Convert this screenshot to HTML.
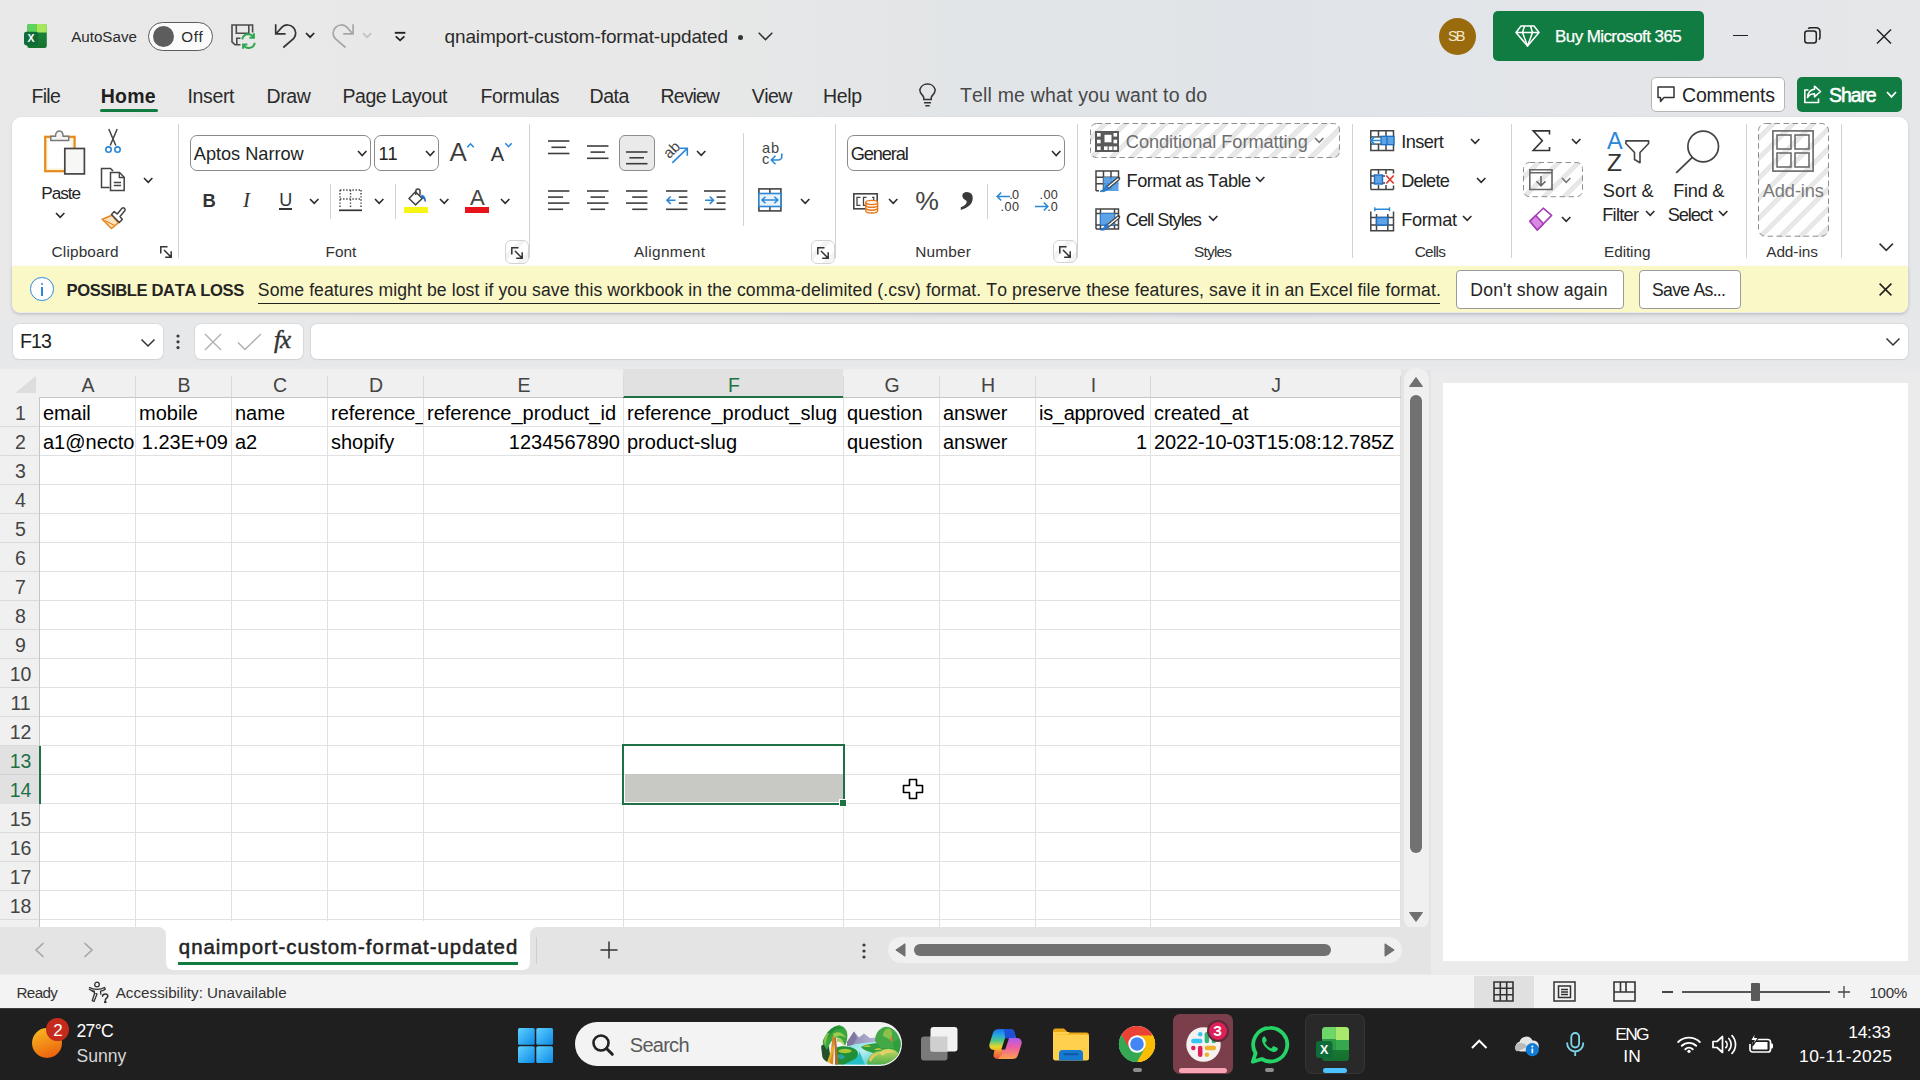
<!DOCTYPE html>
<html lang="en">
<head>
<meta charset="utf-8">
<title>qnaimport-custom-format-updated - Excel</title>
<style>
*{box-sizing:border-box;margin:0;padding:0}
html,body{width:1920px;height:1080px;overflow:hidden}
body{position:relative;font-family:"Liberation Sans",sans-serif;color:#242424;background:#e9e9e9}
.abs{position:absolute}
.t{position:absolute;white-space:nowrap;line-height:1;transform-origin:0 0;font-kerning:none}
svg{position:absolute;overflow:visible}
/* ---------- window chrome ---------- */
#chrome{left:0;top:0;width:1920px;height:1008px;background:linear-gradient(90deg,#e9e9e9 0%,#e8e8e8 35%,#e2e5e7 50%,#e0e4e8 65%,#e3e5e9 85%,#e6e7e9 100%)}
#ribbon{left:12px;top:117px;width:1896px;height:196px;background:#fff;border-radius:9px 9px 8px 8px;box-shadow:0 1px 3px rgba(0,0,0,.12)}
#msgbar{left:12px;top:266px;width:1896px;height:46px;background:#fbf8c8;border-radius:0 0 8px 8px;box-shadow:0 2px 4px rgba(0,0,0,.10)}
#lower{left:0;top:318px;width:1920px;height:657px;background:linear-gradient(180deg,#e6e8ea 0,#e7e8ea 45px,#ebebec 60px,#ebebec 100%)}
/* ---------- formula bar ---------- */
.fbox{background:#fff;border-radius:6px;height:35px;top:324px;box-shadow:0 0 0 1px rgba(0,0,0,.05),0 1px 2px rgba(0,0,0,.06)}
/* ---------- grid ---------- */
#grid{left:0;top:370px;width:1401px;height:557px;background:#fff;overflow:hidden}
#colhdr{left:0;top:0;width:1401px;height:28px;background:#f0f0f0}
#rowhdr{left:0;top:28px;width:39px;height:529px;background:#f0f0f0}
.vl{position:absolute;top:28px;width:1px;height:529px;background:#e1e1e1}
.hl{position:absolute;left:40px;width:1361px;height:1px;background:#e1e1e1}
.ch{position:absolute;top:3px;height:24px;font-size:19.5px;line-height:24px;text-align:center;color:#444}
.rh{position:absolute;left:1px;width:39px;height:29px;font-size:19.5px;line-height:30px;text-align:center;color:#444}
.c{position:absolute;height:28px;font-size:20px;line-height:30.500px;color:#000;white-space:nowrap;overflow:hidden;padding:0 3px;font-kerning:none}
.r{text-align:right}
.hatch{background:repeating-linear-gradient(135deg,#fff 0,#fff 8.800px,#e7e7e7 8.800px,#e7e7e7 14.100px)}
.hatch2{background:repeating-linear-gradient(135deg,#fff 0,#fff 8.800px,#f3f3f3 8.800px,#f3f3f3 14.100px)}
/* ---------- taskbar ---------- */
#taskbar{left:0;top:1008px;width:1920px;height:72px;background:#1f1f1f;box-shadow:inset 0 1px 0 #3c3c3c}
</style>
</head>
<body>
<div id="chrome" class="abs"></div>
<div id="lower" class="abs"></div>
<div id="ribbon" class="abs"></div>
<div id="msgbar" class="abs"></div>

<!-- TITLEBAR -->
<div id="titlebar" class="abs" style="left:0;top:0;width:1920px;height:72px">
<svg style="left:23px;top:23px" width="25" height="26" viewBox="0 0 25 26">
<defs><linearGradient id="xg1" x1="0" y1="0" x2="0" y2="1"><stop offset="0" stop-color="#1f8a3a"/><stop offset="1" stop-color="#14732f"/></linearGradient></defs>
<rect x="4.200" y="1" width="19.600" height="24" rx="2.200" fill="url(#xg1)"/>
<path d="M4.200 3.200a2.200 2.200 0 0 1 2.200-2.200H13.500V9.500H4.200z" fill="#5fd45c"/>
<path d="M13.500 1h8.100a2.200 2.200 0 0 1 2.200 2.200V9.500H13.500z" fill="#a6e85c"/>
<rect x="1" y="8.800" width="14.200" height="13.600" rx="2.400" fill="#0f6c39"/>
<text x="8.100" y="19.300" text-anchor="middle" font-size="10.500" font-weight="700" fill="#fff" font-family="Liberation Sans, sans-serif">X</text>
</svg>
<div class="t" style="left:71.20px;top:29.13px;font-size:15.2px;color:#2b2b2b;letter-spacing:-0.015px;">AutoSave</div>
<div class="abs" style="left:147.500px;top:21.500px;width:65px;height:29px;border:1.500px solid #5c5c5c;border-radius:15px;background:#fbfbfb"></div>
<div class="abs" style="left:152.500px;top:25.500px;width:21px;height:21px;border-radius:50%;background:#5d5d5d"></div>
<div class="t" style="left:181.30px;top:29.13px;font-size:15.2px;color:#2b2b2b;letter-spacing:0.583px;">Off</div>
<svg style="left:231px;top:24px" width="25" height="24" viewBox="0 0 25 24" fill="none">
<path d="M9.500 20.800H4L1 17.800V1H21.600V8.500" stroke="#4a4a4a" stroke-width="1.600"/>
<path d="M5.300 1V9.300H17.800V1M5.800 20.500V14.200H9.500" stroke="#4a4a4a" stroke-width="1.600"/>
<path d="M11.300 15.300A6 6 0 0 1 22.300 13M23.700 18.800A6 6 0 0 1 12.700 21.200" stroke="#2ea84f" stroke-width="2"/>
<path d="M22.900 9.300V13.800H18.400M12.100 24.700V20.400H16.400" stroke="#2ea84f" stroke-width="2"/>
</svg>
<svg style="left:274px;top:23px" width="24" height="26" viewBox="0 0 24 26" fill="none" stroke="#333" stroke-width="1.700">
<path d="M1.700 1.200V10.800H11.600"/><path d="M2.300 10.500L8.200 3.900A8.200 8.200 0 0 1 19.800 15.400L9.300 24.500"/></svg>
<svg style="left:306.2px;top:33.2px" width="8.2" height="4.8" viewBox="0 0 8.2 4.8"><path d="M0 0L4.1 4.2L8.2 0" fill="none" stroke="#222" stroke-width="1.7" stroke-linejoin="miter"/></svg>
<svg style="left:332px;top:23px" width="24" height="26" viewBox="0 0 24 26" fill="none" stroke="#a6a6a6" stroke-width="1.700">
<path d="M21.100 1.200V10.800H11.200"/><path d="M20.500 10.500L14.600 3.900A8.200 8.200 0 0 0 3 15.400L13.500 24.500"/></svg>
<svg style="left:363.2px;top:33.2px" width="8.2" height="4.8" viewBox="0 0 8.2 4.8"><path d="M0 0L4.1 4.2L8.2 0" fill="none" stroke="#c0c0c0" stroke-width="1.7" stroke-linejoin="miter"/></svg>
<svg style="left:394px;top:31px" width="12" height="11" viewBox="0 0 12 11" fill="none" stroke="#222"><path d="M.8 1.800h10.600" stroke-width="1.900"/><path d="M1.800 5.300L6.100 9.300 10.400 5.300" stroke-width="1.800"/></svg>
<div class="t" style="left:444.50px;top:26.92px;font-size:19px;color:#2b2b2b;letter-spacing:-0.125px;">qnaimport-custom-format-updated</div>
<div class="abs" style="left:738px;top:35px;width:5px;height:5px;border-radius:50%;background:#333"></div>
<svg style="left:758px;top:32px" width="15" height="9" viewBox="0 0 15 9" fill="none" stroke="#333" stroke-width="1.500"><path d="M.7 .8L7.500 7.600 14.300 .8"/></svg>
<div class="abs" style="left:1438.500px;top:17.500px;width:37px;height:37px;border-radius:50%;background:#9a6b0d"></div>
<div class="t" style="left:1448.00px;top:28.93px;font-size:14.5px;color:#f4ead0;letter-spacing:-2.043px;">SB</div>
<div class="abs" style="left:1493px;top:11px;width:211px;height:50px;border-radius:5px;background:#107c41"></div>
<svg style="left:1515px;top:25px" width="25" height="22" viewBox="0 0 25 22" fill="none" stroke="#fff" stroke-width="1.500" stroke-linejoin="round">
<path d="M6 1H19L24 7.500 12.500 21 1 7.500Z"/><path d="M1 7.500H24M9.500 1L7.500 7.500 12.500 21 17.500 7.500 15.500 1"/></svg>
<div class="t" style="left:1555.00px;top:28.11px;font-size:17px;color:#fff;letter-spacing:-0.584px;-webkit-text-stroke:.25px #fff;">Buy Microsoft 365</div>
<div class="abs" style="left:1732.500px;top:34.500px;width:15px;height:1.500px;background:#222"></div>
<svg style="left:1804px;top:27px" width="17" height="17" viewBox="0 0 17 17" fill="none" stroke="#222" stroke-width="1.500"><rect x=".8" y="4" width="11.500" height="12" rx="2.500"/><path d="M4.300 1.800A2.500 2.500 0 0 1 6.500 .8H12.500A3.500 3.500 0 0 1 16 4.300V10.500A2.500 2.500 0 0 1 14.800 12.600"/></svg>
<svg style="left:1876px;top:29px" width="16" height="15" viewBox="0 0 16 15" fill="none" stroke="#222" stroke-width="1.500"><path d="M1 .5L15 14.500M15 .5L1 14.500"/></svg>
</div><!--/titlebar-->
<!-- TABS -->
<div id="tabs" class="abs" style="left:0;top:72px;width:1920px;height:45px">
<div class="t" style="left:31.50px;top:14.59px;font-size:19.5px;color:#2b2b2b;letter-spacing:-0.722px;">File</div>
<div class="t" style="left:187.50px;top:14.59px;font-size:19.5px;color:#2b2b2b;letter-spacing:-0.354px;">Insert</div>
<div class="t" style="left:266.50px;top:14.59px;font-size:19.5px;color:#2b2b2b;letter-spacing:-0.351px;">Draw</div>
<div class="t" style="left:342.50px;top:14.59px;font-size:19.5px;color:#2b2b2b;letter-spacing:-0.451px;">Page Layout</div>
<div class="t" style="left:480.50px;top:14.59px;font-size:19.5px;color:#2b2b2b;letter-spacing:-0.325px;">Formulas</div>
<div class="t" style="left:589.50px;top:14.59px;font-size:19.5px;color:#2b2b2b;letter-spacing:-0.435px;">Data</div>
<div class="t" style="left:660.50px;top:14.59px;font-size:19.5px;color:#2b2b2b;letter-spacing:-0.900px;">Review</div>
<div class="t" style="left:751.70px;top:14.59px;font-size:19.5px;color:#2b2b2b;letter-spacing:-0.555px;">View</div>
<div class="t" style="left:823.00px;top:14.59px;font-size:19.5px;color:#2b2b2b;letter-spacing:-0.370px;">Help</div>
<div class="t" style="left:100.80px;top:14.59px;font-size:19.5px;color:#1f1f1f;letter-spacing:0.176px;font-weight:700;">Home</div>
<div class="abs" style="left:100px;top:36.5px;width:58px;height:3px;border-radius:2px;background:#107c41"></div>
<svg style="left:918px;top:11px" width="19" height="24" viewBox="0 0 19 24" fill="none" stroke="#333" stroke-width="1.500">
<path d="M5.800 16.500V15c0-1.200-.7-2.100-1.700-3.100A7.400 7.400 0 0 1 1.800 6.800 7.700 7.700 0 0 1 9.500 1 7.700 7.700 0 0 1 17.200 6.800a7.400 7.400 0 0 1-2.300 5.100c-1 1-1.700 1.900-1.700 3.100v1.500z"/><path d="M6 19.700h7M7.300 22.700h4.400"/></svg>
<div class="t" style="left:960.00px;top:14.39px;font-size:19.5px;color:#484848;letter-spacing:0.168px;">Tell me what you want to do</div>
<div class="abs" style="left:1650.500px;top:4.5px;width:134px;height:35px;border-radius:5px;background:#fff;border:1px solid #b5b5b5"></div>
<svg style="left:1657px;top:14px" width="18" height="17" viewBox="0 0 18 17" fill="none" stroke="#333" stroke-width="1.500" stroke-linejoin="round"><path d="M1 1H17V11.500H7L3.500 15.500V11.500H1Z"/></svg>
<div class="t" style="left:1682.00px;top:13.69px;font-size:19.5px;color:#242424;letter-spacing:-0.183px;">Comments</div>
<div class="abs" style="left:1797px;top:4.5px;width:105px;height:35px;border-radius:5px;background:#107c41"></div>
<svg style="left:1803px;top:13px" width="19" height="19" viewBox="0 0 19 19" fill="none" stroke="#fff" stroke-width="1.600" stroke-linejoin="round">
<path d="M5.500 5H1.800V17.500H15.500V13.500"/><path d="M11.500 1.200L17.500 6.500 11.500 11.800V8.700C8 8.700 6 10 4.500 12.500 4.800 8 7 4.800 11.500 4.300Z"/></svg>
<div class="t" style="left:1829.00px;top:13.69px;font-size:19.5px;color:#fff;letter-spacing:-1.081px;-webkit-text-stroke:.55px #fff;">Share</div>
<svg style="left:1887px;top:20.299999999999997px" width="9" height="5.5" viewBox="0 0 9 5.5"><path d="M0 0L4.5 4.9L9 0" fill="none" stroke="#fff" stroke-width="1.7" stroke-linejoin="miter"/></svg>
</div><!--/tabs-->
<!-- RIBBON CONTENT -->
<div id="rib" class="abs" style="left:0;top:117px;width:1920px;height:150px">
<svg style="left:43px;top:12px" width="43" height="47" viewBox="0 0 43 47" >
<rect x="2.200" y="7.800" width="29.400" height="34.400" fill="#fdf3d6" stroke="#e5891c" stroke-width="2.200"/>
<rect x="5.300" y="10.800" width="23" height="28.500" fill="#fff"/>
<path d="M7.800 11.500V7.300h4.700c0-2 .7-5.300 3.800-5.300s3.800 3.300 3.800 5.300h5.600v4.200z" fill="#f4f4f4" stroke="#7a7a7a" stroke-width="1.500"/>
<rect x="21.800" y="19.500" width="19.600" height="25.400" fill="#f7f7f5" stroke="#444" stroke-width="1.700"/>
</svg>
<div class="t" style="left:41.30px;top:67.64px;font-size:17.2px;color:#242424;letter-spacing:-1.070px;">Paste</div>
<svg style="left:56.2px;top:96.19999999999999px" width="8.4" height="5" viewBox="0 0 8.4 5" ><path d="M0 0L4.2 4.3L8.4 0" fill="none" stroke="#2b2b2b" stroke-width="1.6"/></svg>
<svg style="left:104px;top:11px" width="18" height="26" viewBox="0 0 18 26" >
<path d="M4.800 1L11.800 17.500M13.200 1L6.200 17.500" fill="none" stroke="#444" stroke-width="1.500"/>
<circle cx="4.500" cy="21.600" r="2.700" fill="none" stroke="#2b88d8" stroke-width="1.600"/>
<circle cx="13.500" cy="21.600" r="2.700" fill="none" stroke="#2b88d8" stroke-width="1.600"/>
</svg>
<svg style="left:100px;top:50px" width="26" height="25" viewBox="0 0 26 25" >
<path d="M9.500 20.500H1.500V1.500H10.500L13 4" fill="none" stroke="#444" stroke-width="1.500"/>
<path d="M10.500 5.500H19.500L24.200 10.200V23.500H10.500Z" fill="#fff" stroke="#444" stroke-width="1.500"/>
<path d="M19.300 5.800V10.500H24M13.800 15.500H21M13.800 18.500H21" fill="none" stroke="#444" stroke-width="1.300"/>
</svg>
<svg style="left:144px;top:61px" width="8.4" height="5" viewBox="0 0 8.4 5" ><path d="M0 0L4.2 4.3L8.4 0" fill="none" stroke="#2b2b2b" stroke-width="1.6"/></svg>
<svg style="left:101px;top:89px" width="25" height="24" viewBox="0 0 25 24" >
<path d="M1.200 13.200L11 9.200 17.300 16.800 10.500 22.500Z" fill="#fbe3c4" stroke="#e5891c" stroke-width="1.600" stroke-linejoin="round"/>
<path d="M4 14.500L13.500 19.500" fill="none" stroke="#e5891c" stroke-width="1.400"/>
<path d="M10.500 8.500L13.200 5.600 16.200 8 21 2.300a1.900 1.900 0 0 1 2.800 2.500L19 10.500 21.300 13.500 18.300 16.500Z" fill="#fff" stroke="#444" stroke-width="1.500" stroke-linejoin="round"/>
</svg>
<div class="t" style="left:51.60px;top:127.26px;font-size:15.4px;color:#333;letter-spacing:0.136px;">Clipboard</div>
<svg style="left:160px;top:129px" width="12" height="12" viewBox="0 0 12 12" ><path d="M.8 7.500V.8H7.500M4 4L11 11M11.200 5.200V11.200H5.200" fill="none" stroke="#333" stroke-width="1.500"/></svg>
<div class="abs" style="left:177.5px;top:7px;width:1px;height:133.5px;background:#d2d2d2"></div>
<div class="abs" style="left:190px;top:18px;width:180.5px;height:35.5px;border:1px solid #8a8a8a;border-radius:7px;background:#fff"></div>
<div class="t" style="left:193.80px;top:28.39px;font-size:18.2px;color:#242424;letter-spacing:-0.027px;">Aptos Narrow</div>
<svg style="left:357.6px;top:34.19999999999999px" width="8.4" height="5.2" viewBox="0 0 8.4 5.2" ><path d="M0 0L4.2 4.5L8.4 0" fill="none" stroke="#2b2b2b" stroke-width="1.6"/></svg>
<div class="abs" style="left:374.3px;top:18px;width:64.5px;height:35.5px;border:1px solid #8a8a8a;border-radius:7px;background:#fff"></div>
<div class="t" style="left:378.50px;top:28.39px;font-size:18.2px;color:#242424;letter-spacing:-1.200px;">11</div>
<svg style="left:425.8px;top:34.19999999999999px" width="8.4" height="5.2" viewBox="0 0 8.4 5.2" ><path d="M0 0L4.2 4.5L8.4 0" fill="none" stroke="#2b2b2b" stroke-width="1.6"/></svg>
<div class="t" style="left:449.60px;top:21.79px;font-size:26px;color:#333;-webkit-text-stroke:.2px #fff;">A</div>
<svg style="left:466.5px;top:25.5px" width="7" height="4.5" viewBox="0 0 7 4.5" ><path d="M.3 4.200L3.500 .8 6.700 4.200" fill="none" stroke="#2b88d8" stroke-width="1.600"/></svg>
<div class="t" style="left:490.80px;top:26.87px;font-size:20px;color:#333;">A</div>
<svg style="left:504.5px;top:26px" width="7" height="4.5" viewBox="0 0 7 4.5" ><path d="M.3 .3L3.500 3.700 6.700 .3" fill="none" stroke="#2b88d8" stroke-width="1.600"/></svg>
<div class="t" style="left:202.50px;top:74.92px;font-size:18.4px;color:#333;font-weight:700;">B</div>
<div class="t" style="left:242.88px;top:72.91px;font-size:21px;color:#333;font-style:italic;font-family:'Liberation Serif',serif;">I</div>
<div class="t" style="left:279.20px;top:73.86px;font-size:18px;color:#333;">U</div>
<div class="abs" style="left:278.5px;top:91px;width:13.300000000000011px;height:1.5999999999999943px;background:#333"></div>
<svg style="left:310px;top:82px" width="8.4" height="5" viewBox="0 0 8.4 5" ><path d="M0 0L4.2 4.3L8.4 0" fill="none" stroke="#2b2b2b" stroke-width="1.6"/></svg>
<div class="abs" style="left:329.5px;top:66.5px;width:1px;height:35.19999999999999px;background:#d2d2d2"></div>
<svg style="left:339px;top:72px" width="23" height="23" viewBox="0 0 23 23" >
<path d="M1 1H22M1 1V19M22 1V19M11.500 1V19M1 10H22" fill="none" stroke="#444" stroke-width="1.400" stroke-dasharray="1.400 1.700"/>
<path d="M0 21.300H23" stroke="#333" stroke-width="1.700"/></svg>
<svg style="left:374.8px;top:82px" width="8.4" height="5" viewBox="0 0 8.4 5" ><path d="M0 0L4.2 4.3L8.4 0" fill="none" stroke="#2b2b2b" stroke-width="1.6"/></svg>
<div class="abs" style="left:394.5px;top:66.5px;width:1px;height:35.19999999999999px;background:#d2d2d2"></div>
<svg style="left:406px;top:71px" width="22" height="18" viewBox="0 0 22 18" >
<path d="M9.500 3.800L16.200 10.500 9.500 16.800 3 10.500Z" fill="#fff" stroke="#444" stroke-width="1.600" stroke-linejoin="round"/>
<path d="M9.800 7V3.300c0-1.400 1-2.300 2.100-2.300s2.100.9 2.100 2.300v4" fill="none" stroke="#444" stroke-width="1.500"/>
<path d="M15.800 7.200c2.200.3 3.700 2.200 3.500 6.300-.8-2.500-2-3.600-3.700-4z" fill="#1e6fc0" stroke="#1e6fc0" stroke-width="1"/></svg>
<div class="abs" style="left:403.7px;top:89.6px;width:24.400000000000034px;height:6.599999999999994px;background:#f6f516"></div>
<svg style="left:440px;top:82px" width="8.4" height="5" viewBox="0 0 8.4 5" ><path d="M0 0L4.2 4.3L8.4 0" fill="none" stroke="#2b2b2b" stroke-width="1.6"/></svg>
<div class="t" style="left:470.00px;top:70.01px;font-size:22.2px;color:#444;">A</div>
<div class="abs" style="left:464.8px;top:89.80000000000001px;width:24.19999999999999px;height:6.199999999999989px;background:#e8121a"></div>
<svg style="left:501px;top:82px" width="8.4" height="5" viewBox="0 0 8.4 5" ><path d="M0 0L4.2 4.3L8.4 0" fill="none" stroke="#2b2b2b" stroke-width="1.6"/></svg>
<div class="t" style="left:325.60px;top:127.26px;font-size:15.4px;color:#333;letter-spacing:-0.038px;">Font</div>
<div class="abs hatch2" style="left:505px;top:123.0px;width:23.500px;height:23.500px;border:1px solid #d4d4d4;border-radius:6px"></div><svg style="left:511px;top:129.5px" width="12" height="12" viewBox="0 0 12 12" ><path d="M.8 7.500V.8H7.500M4 4L11 11M11.200 5.200V11.200H5.200" fill="none" stroke="#333" stroke-width="1.500"/></svg>
<div class="abs" style="left:528.5px;top:7px;width:1px;height:133.5px;background:#d2d2d2"></div>
<svg style="left:548.3px;top:22.400000000000006px" width="21.4" height="16.5" viewBox="0 0 21.4 16.5" ><path d="M0.00 2.00H21.40" stroke="#3d3d3d" stroke-width="1.6"/><path d="M3.40 8.30H17.90" stroke="#3d3d3d" stroke-width="1.6"/><path d="M0.00 14.50H21.40" stroke="#3d3d3d" stroke-width="1.6"/></svg>
<svg style="left:587.3px;top:26.80000000000001px" width="21.5" height="16.3" viewBox="0 0 21.5 16.3" ><path d="M0.00 2.00H21.50" stroke="#3d3d3d" stroke-width="1.6"/><path d="M3.50 8.10H18.00" stroke="#3d3d3d" stroke-width="1.6"/><path d="M0.00 14.30H21.50" stroke="#3d3d3d" stroke-width="1.6"/></svg>
<div class="abs" style="left:619.2px;top:18.19999999999999px;width:36.0px;height:35.60000000000002px;background:#eaeaea;border:1px solid #8c8c8c;border-radius:6px"></div>
<svg style="left:626.3px;top:33.30000000000001px" width="21.5" height="15.7" viewBox="0 0 21.5 15.7" ><path d="M0.00 2.00H21.50" stroke="#3d3d3d" stroke-width="1.6"/><path d="M3.40 7.80H18.00" stroke="#3d3d3d" stroke-width="1.6"/><path d="M0.00 13.70H21.50" stroke="#3d3d3d" stroke-width="1.6"/></svg>
<div class="t" style="left:662.500px;top:24.5px;font-size:15px;color:#444;transform:rotate(-45deg);transform-origin:50% 50%">ab</div>
<svg style="left:671px;top:30px" width="18" height="17" viewBox="0 0 18 17" ><path d="M1.300 15.800L16 1.600M8.800 1.300H16.300V8.800" fill="none" stroke="#2b88d8" stroke-width="1.600"/></svg>
<svg style="left:697px;top:34.19999999999999px" width="8.4" height="5" viewBox="0 0 8.4 5" ><path d="M0 0L4.2 4.3L8.4 0" fill="none" stroke="#2b2b2b" stroke-width="1.6"/></svg>
<svg style="left:548.3px;top:72.1px" width="21.4" height="22.3" viewBox="0 0 21.4 22.3" ><path d="M0.00 2.00H21.40" stroke="#3d3d3d" stroke-width="1.6"/><path d="M0.00 8.10H15.10" stroke="#3d3d3d" stroke-width="1.6"/><path d="M0.00 14.10H21.40" stroke="#3d3d3d" stroke-width="1.6"/><path d="M0.00 20.30H15.10" stroke="#3d3d3d" stroke-width="1.6"/></svg>
<svg style="left:587.3px;top:72.1px" width="21.5" height="22.3" viewBox="0 0 21.5 22.3" ><path d="M0.00 2.00H21.50" stroke="#3d3d3d" stroke-width="1.6"/><path d="M3.50 8.10H18.00" stroke="#3d3d3d" stroke-width="1.6"/><path d="M0.00 14.10H21.50" stroke="#3d3d3d" stroke-width="1.6"/><path d="M3.50 20.30H18.00" stroke="#3d3d3d" stroke-width="1.6"/></svg>
<svg style="left:626.4px;top:72.1px" width="21.4" height="22.3" viewBox="0 0 21.4 22.3" ><path d="M0.00 2.00H21.40" stroke="#3d3d3d" stroke-width="1.6"/><path d="M6.20 8.10H21.40" stroke="#3d3d3d" stroke-width="1.6"/><path d="M0.00 14.10H21.40" stroke="#3d3d3d" stroke-width="1.6"/><path d="M6.20 20.30H21.40" stroke="#3d3d3d" stroke-width="1.6"/></svg>
<svg style="left:665.5px;top:72.1px" width="21.4" height="22.3" viewBox="0 0 21.4 22.3" ><path d="M0.00 2.00H21.40" stroke="#3d3d3d" stroke-width="1.6"/><path d="M12.80 8.10H21.40" stroke="#3d3d3d" stroke-width="1.6"/><path d="M12.80 14.10H21.40" stroke="#3d3d3d" stroke-width="1.6"/><path d="M0.00 20.30H21.40" stroke="#3d3d3d" stroke-width="1.6"/></svg>
<svg style="left:665.5px;top:79px" width="9.5" height="8.4" viewBox="0 0 9.5 8.4" ><path d="M9.500 4.200H1.200M4.700 .5L1 4.200 4.700 7.900" fill="none" stroke="#2b88d8" stroke-width="1.600"/></svg>
<svg style="left:704.4px;top:72.1px" width="21.6" height="22.3" viewBox="0 0 21.6 22.3" ><path d="M0.00 2.00H21.60" stroke="#3d3d3d" stroke-width="1.6"/><path d="M12.60 8.10H21.60" stroke="#3d3d3d" stroke-width="1.6"/><path d="M12.60 14.10H21.60" stroke="#3d3d3d" stroke-width="1.6"/><path d="M0.00 20.30H21.60" stroke="#3d3d3d" stroke-width="1.6"/></svg>
<svg style="left:704.5px;top:79px" width="9.5" height="8.4" viewBox="0 0 9.5 8.4" ><path d="M0 4.200H8.300M4.800 .5L8.500 4.200 4.800 7.900" fill="none" stroke="#2b88d8" stroke-width="1.600"/></svg>
<div class="abs" style="left:742.5px;top:16px;width:1px;height:93px;background:#d2d2d2"></div>
<div class="t" style="left:762.00px;top:23.74px;font-size:14.6px;color:#444;letter-spacing:0.965px;">ab</div>
<div class="t" style="left:762.00px;top:34.84px;font-size:14.6px;color:#444;">c</div>
<svg style="left:769.5px;top:35.5px" width="13.5" height="12" viewBox="0 0 13.5 12" ><path d="M11.800 .5V3.500a3.500 3.500 0 0 1-3.500 3.500H1.500M5.500 2.800L1.300 7 5.500 11.200" fill="none" stroke="#2b88d8" stroke-width="1.600"/></svg>
<svg style="left:757.5px;top:71.30000000000001px" width="24" height="24" viewBox="0 0 24 24" >
<rect x=".9" y=".9" width="22" height="22" fill="#fff" stroke="#444" stroke-width="1.600"/>
<path d="M11.900 1V5.500M11.900 18.500V23" stroke="#444" stroke-width="1.500"/>
<rect x=".9" y="5.500" width="22" height="13" fill="#eaf3fc" stroke="#2b88d8" stroke-width="1.600"/>
<path d="M4.200 12H19.600M7.400 8.700L4 12 7.400 15.300M16.400 8.700L19.800 12 16.400 15.300" fill="none" stroke="#2b88d8" stroke-width="1.500"/></svg>
<svg style="left:801px;top:81.80000000000001px" width="8.4" height="5" viewBox="0 0 8.4 5" ><path d="M0 0L4.2 4.3L8.4 0" fill="none" stroke="#2b2b2b" stroke-width="1.6"/></svg>
<div class="t" style="left:634.00px;top:127.26px;font-size:15.4px;color:#333;letter-spacing:0.315px;">Alignment</div>
<div class="abs hatch2" style="left:811px;top:123.0px;width:23.500px;height:23.500px;border:1px solid #d4d4d4;border-radius:6px"></div><svg style="left:817px;top:129.5px" width="12" height="12" viewBox="0 0 12 12" ><path d="M.8 7.500V.8H7.500M4 4L11 11M11.200 5.200V11.200H5.200" fill="none" stroke="#333" stroke-width="1.500"/></svg>
<div class="abs" style="left:834.5px;top:7px;width:1px;height:133.5px;background:#d2d2d2"></div>
<div class="abs" style="left:847px;top:18px;width:218px;height:35.5px;border:1px solid #8a8a8a;border-radius:7px;background:#fff"></div>
<div class="t" style="left:850.70px;top:28.39px;font-size:18.2px;color:#242424;letter-spacing:-1.109px;">General</div>
<svg style="left:1052px;top:34.19999999999999px" width="8.4" height="5.2" viewBox="0 0 8.4 5.2" ><path d="M0 0L4.2 4.5L8.4 0" fill="none" stroke="#2b2b2b" stroke-width="1.6"/></svg>
<svg style="left:852.5px;top:75.80000000000001px" width="26" height="20.5" viewBox="0 0 26 20.5" >
<rect x=".8" y=".8" width="23.400" height="15" fill="#fff" stroke="#444" stroke-width="1.600"/>
<path d="M7.500 4.300H4V12.300H7.500M13.500 4.300H10.500V12.300H13.500M19 4.300h1.700v3" fill="none" stroke="#444" stroke-width="1.300"/>
<path d="M12.800 9.500v8.300c0 1.200 2.600 2.200 5.900 2.200s5.900-1 5.900-2.200V9.500" fill="#fff5ea" stroke="#e5791c" stroke-width="1.400"/>
<ellipse cx="18.700" cy="9.500" rx="5.900" ry="2.100" fill="#fff5ea" stroke="#e5791c" stroke-width="1.400"/>
<path d="M12.800 12.300c0 1.200 2.600 2.100 5.900 2.100s5.900-.9 5.900-2.100M12.800 15.100c0 1.200 2.600 2.100 5.900 2.100s5.900-.9 5.900-2.100" fill="none" stroke="#e5791c" stroke-width="1.400"/></svg>
<svg style="left:889px;top:82px" width="8.4" height="5" viewBox="0 0 8.4 5" ><path d="M0 0L4.2 4.3L8.4 0" fill="none" stroke="#2b2b2b" stroke-width="1.6"/></svg>
<div class="t" style="left:915.20px;top:71.28px;font-size:26.6px;color:#444;">%</div>
<div class="t" style="left:960.00px;top:34.15px;font-size:60px;color:#3a3a3a;font-weight:700;font-family:'Liberation Serif',serif;">,</div>
<div class="abs" style="left:986.5px;top:66.5px;width:1px;height:35.19999999999999px;background:#d2d2d2"></div>
<svg style="left:996px;top:74.5px" width="14.5" height="9" viewBox="0 0 14.5 9" ><path d="M14 4.500H1.300M5.200 .5L1.200 4.500 5.200 8.500" fill="none" stroke="#2b88d8" stroke-width="1.600"/></svg>
<div class="t" style="left:1009.20px;top:72.03px;font-size:12.6px;color:#333;letter-spacing:-0.708px;">.0</div>
<div class="t" style="left:1000.40px;top:84.13px;font-size:12.6px;color:#333;letter-spacing:0.493px;">.00</div>
<div class="t" style="left:1039.60px;top:72.03px;font-size:12.6px;color:#333;letter-spacing:0.293px;">.00</div>
<svg style="left:1035px;top:85px" width="14" height="9" viewBox="0 0 14 9" ><path d="M0 4.500H12.700M8.800 .5L12.800 4.500 8.800 8.500" fill="none" stroke="#2b88d8" stroke-width="1.600"/></svg>
<div class="t" style="left:1047.20px;top:84.13px;font-size:12.6px;color:#333;letter-spacing:-0.008px;">.0</div>
<div class="t" style="left:915.30px;top:127.06px;font-size:15.4px;color:#333;letter-spacing:0.184px;">Number</div>
<div class="abs hatch2" style="left:1053px;top:122.80000000000001px;width:23.500px;height:23.500px;border:1px solid #d4d4d4;border-radius:6px"></div><svg style="left:1059px;top:129.3px" width="12" height="12" viewBox="0 0 12 12" ><path d="M.8 7.500V.8H7.500M4 4L11 11M11.200 5.200V11.200H5.200" fill="none" stroke="#333" stroke-width="1.500"/></svg>
<div class="abs" style="left:1076.5px;top:7px;width:1px;height:133.5px;background:#d2d2d2"></div>
<div class="abs hatch" style="left:1089.5px;top:6px;width:250.0px;height:35px;border-radius:6px"></div><svg style="left:1089.5px;top:6px" width="250.0" height="35" viewBox="0 0 250.0 35" ><rect x=".5" y=".5" width="249.0" height="34" rx="6" fill="none" stroke="#8e8e8e" stroke-width="1" stroke-dasharray="5.500 3.500"/></svg>
<svg style="left:1095px;top:13.5px" width="24" height="21" viewBox="0 0 24 21" >
<rect x="0" y="0" width="24" height="21" fill="#595959"/>
<rect x="2" y="2" width="3.600" height="3.600" fill="#fff"/><rect x="2" y="8.700" width="3.600" height="3.600" fill="#fff"/><rect x="2" y="15.400" width="3.600" height="3.600" fill="#fff"/>
<rect x="9.500" y="3.800" width="7" height="7.500" fill="#fff"/>
<rect x="18.500" y="2" width="3.600" height="3.600" fill="#fff"/><rect x="18.500" y="8.700" width="3.600" height="3.600" fill="#fff"/><rect x="18.500" y="15.400" width="3.600" height="3.600" fill="#fff"/>
<rect x="9" y="15.400" width="3.600" height="3.600" fill="#fff"/><rect x="13.800" y="15.400" width="3.600" height="3.600" fill="#fff"/></svg>
<div class="t" style="left:1125.80px;top:16.19px;font-size:18.2px;color:#6e6e6e;letter-spacing:-0.048px;">Conditional Formatting</div>
<svg style="left:1315px;top:21.30000000000001px" width="8.4" height="5" viewBox="0 0 8.4 5" ><path d="M0 0L4.2 4.3L8.4 0" fill="none" stroke="#777" stroke-width="1.6"/></svg>
<svg style="left:1095px;top:52.5px" width="25" height="23" viewBox="0 0 25 23" >
<path d="M1 21V1H23.500V8M1 7.200H23.500M1 13.800H8M8.500 1V21M16 1V7.500M1 20.800H4" fill="none" stroke="#444" stroke-width="1.500"/>
<path d="M8.500 7.200H23.500V21H8.500Z" fill="#5ea3e6"/><path d="M8.500 13.800H23.500M16 7.200V21" stroke="#2b7cd3" stroke-width="1" stroke-dasharray="2 1.500"/><path d="M23.500 8.5L12.800 17.5" stroke="#444" stroke-width="3.600" stroke-linecap="round"/><path d="M23 8.9L13 17.2" stroke="#fff" stroke-width="1.300" stroke-linecap="round"/>
<path d="M5 21.3c3.500 1.200 7 -.5 8.800 -3.800l-2.600-2.300c-1.200 2.800-3 5-6.200 6.100z" fill="#2b7cd3" stroke="#1e6fc0" stroke-width=".8"/></svg>
<div class="t" style="left:1126.60px;top:55.19px;font-size:18.2px;color:#242424;letter-spacing:-0.568px;">Format as Table</div>
<svg style="left:1255.5px;top:60.19999999999999px" width="8.4" height="5" viewBox="0 0 8.4 5" ><path d="M0 0L4.2 4.3L8.4 0" fill="none" stroke="#2b2b2b" stroke-width="1.6"/></svg>
<svg style="left:1095px;top:91.19999999999999px" width="25" height="23" viewBox="0 0 25 23" >
<path d="M1 21V1H23.500V21H1M1 5.500H23.500M5.500 1V21M1 17H23.500M19.500 1V21" fill="none" stroke="#444" stroke-width="1.500"/>
<path d="M5.500 5.500H19.500V17H5.500Z" fill="#5ea3e6" stroke="#2b7cd3" stroke-width="1"/><path d="M23.500 9.0L12.800 18.0" stroke="#444" stroke-width="3.600" stroke-linecap="round"/><path d="M23 9.4L13 17.7" stroke="#fff" stroke-width="1.300" stroke-linecap="round"/>
<path d="M5 21.8c3.500 1.200 7 -.5 8.800 -3.800l-2.600-2.300c-1.200 2.800-3 5-6.200 6.100z" fill="#2b7cd3" stroke="#1e6fc0" stroke-width=".8"/></svg>
<div class="t" style="left:1125.80px;top:93.99px;font-size:18.2px;color:#242424;letter-spacing:-0.978px;">Cell Styles</div>
<svg style="left:1209px;top:99.19999999999999px" width="8.4" height="5" viewBox="0 0 8.4 5" ><path d="M0 0L4.2 4.3L8.4 0" fill="none" stroke="#2b2b2b" stroke-width="1.6"/></svg>
<div class="t" style="left:1194.00px;top:127.26px;font-size:15.4px;color:#333;letter-spacing:-0.787px;">Styles</div>
<div class="abs" style="left:1351.5px;top:7px;width:1px;height:133.5px;background:#d2d2d2"></div>
<svg style="left:1370px;top:13.300000000000011px" width="24.5" height="21.5" viewBox="0 0 24.5 21.5" >
<path d="M.8 .8H23.500V20.500H.8ZM.8 7H23.500M.8 14H23.500M8.500 .8V7M8.500 14V20.500M16 .8V20.500" fill="none" stroke="#444" stroke-width="1.500"/>
<rect x="1.600" y="7.800" width="9" height="5.400" fill="#fff"/>
<rect x="11" y="6.300" width="13" height="8.400" fill="#5ea3e6" stroke="#1e6fc0" stroke-width="1.300"/>
<path d="M17 6.300V14.700" stroke="#1e6fc0" stroke-width="1.300"/>
<path d="M10.500 10.500H1M5 6.300L.8 10.500 5 14.700" fill="none" stroke="#2b88d8" stroke-width="1.700"/></svg>
<div class="t" style="left:1401.20px;top:16.19px;font-size:18.2px;color:#242424;letter-spacing:-0.584px;">Insert</div>
<svg style="left:1471px;top:21.80000000000001px" width="8.4" height="5" viewBox="0 0 8.4 5" ><path d="M0 0L4.2 4.3L8.4 0" fill="none" stroke="#2b2b2b" stroke-width="1.6"/></svg>
<svg style="left:1370px;top:52.30000000000001px" width="24.5" height="21.5" viewBox="0 0 24.5 21.5" >
<path d="M.8 .8H23.500M.8 20.500H23.500M.8 .8V20.500M23.500 .8V4.500M23.500 16.500V20.500M.8 7H4M.8 14H4M8.500 .8V5M16 .8V5M8.500 16V20.500M16 16V20.500M12 7H15M12 14H15" fill="none" stroke="#444" stroke-width="1.500"/>
<rect x="4.500" y="6" width="8" height="9" fill="#5ea3e6" stroke="#1e6fc0" stroke-width="1.400"/>
<path d="M16.200 6.500L23.700 14.500M23.700 6.500L16.200 14.500" stroke="#e03a2f" stroke-width="1.700"/></svg>
<div class="t" style="left:1401.20px;top:54.89px;font-size:18.2px;color:#242424;letter-spacing:-0.803px;">Delete</div>
<svg style="left:1477px;top:60.80000000000001px" width="8.4" height="5" viewBox="0 0 8.4 5" ><path d="M0 0L4.2 4.3L8.4 0" fill="none" stroke="#2b2b2b" stroke-width="1.6"/></svg>
<svg style="left:1370px;top:89.5px" width="24.5" height="24.5" viewBox="0 0 24.5 24.5" >
<path d="M.8 4.500V23.700H23.500V4.500M.8 10.500H23.500M.8 18H23.500M6.500 7V23.700M17.800 7V23.700" fill="none" stroke="#444" stroke-width="1.500"/>
<rect x="6.500" y="10.500" width="11.300" height="7.500" fill="#5ea3e6" stroke="#1e6fc0" stroke-width="1.400"/>
<path d="M4.800 2.200H19.500M4.800 .3V4.200M19.500 .3V4.200" stroke="#2b88d8" stroke-width="1.400"/></svg>
<div class="t" style="left:1401.20px;top:93.99px;font-size:18.2px;color:#242424;letter-spacing:-0.368px;">Format</div>
<svg style="left:1463px;top:99.19999999999999px" width="8.4" height="5" viewBox="0 0 8.4 5" ><path d="M0 0L4.2 4.3L8.4 0" fill="none" stroke="#2b2b2b" stroke-width="1.6"/></svg>
<div class="t" style="left:1414.70px;top:127.26px;font-size:15.4px;color:#333;letter-spacing:-0.734px;">Cells</div>
<div class="abs" style="left:1510.5px;top:7px;width:1px;height:133.5px;background:#d2d2d2"></div>
<svg style="left:1532px;top:13.300000000000011px" width="18.5" height="21.5" viewBox="0 0 18.5 21.5" ><path d="M17.500 4.500V.9H1.200L10.300 10.700 1.200 20.500H17.500V17" fill="none" stroke="#333" stroke-width="1.600" stroke-linejoin="miter"/></svg>
<svg style="left:1572px;top:21.80000000000001px" width="8.4" height="5" viewBox="0 0 8.4 5" ><path d="M0 0L4.2 4.3L8.4 0" fill="none" stroke="#2b2b2b" stroke-width="1.6"/></svg>
<div class="abs hatch" style="left:1523px;top:45.30000000000001px;width:60px;height:35.19999999999999px;border-radius:6px"></div><svg style="left:1523px;top:45.30000000000001px" width="60" height="35.19999999999999" viewBox="0 0 60 35.19999999999999" ><rect x=".5" y=".5" width="59" height="34.19999999999999" rx="6" fill="none" stroke="#8e8e8e" stroke-width="1" stroke-dasharray="5.500 3.500"/></svg>
<svg style="left:1529px;top:52.30000000000001px" width="24" height="21.5" viewBox="0 0 24 21.5" ><path d="M.8 .8H23V20.500H.8ZM.8 3.800H23M12 7V16.500M7.500 12.300L12 16.800 16.500 12.300" fill="none" stroke="#666" stroke-width="1.600"/></svg>
<svg style="left:1562px;top:61.19999999999999px" width="8.4" height="5" viewBox="0 0 8.4 5" ><path d="M0 0L4.2 4.3L8.4 0" fill="none" stroke="#777" stroke-width="1.6"/></svg>
<svg style="left:1529px;top:90px" width="24" height="24.5" viewBox="0 0 24 24.5" >
<path d="M14.200 1.200L22.600 8.400 8.300 23 .9 14.200Z" fill="#fff" stroke="#a53bb8" stroke-width="1.600" stroke-linejoin="round"/>
<path d="M.9 14.200L6.800 8.500 14.500 16.700 8.300 23Z" fill="#d78be0" stroke="#a53bb8" stroke-width="1.600" stroke-linejoin="round"/></svg>
<svg style="left:1562px;top:100px" width="8.4" height="5" viewBox="0 0 8.4 5" ><path d="M0 0L4.2 4.3L8.4 0" fill="none" stroke="#2b2b2b" stroke-width="1.6"/></svg>
<div class="t" style="left:1607.00px;top:12.71px;font-size:23.5px;color:#2b88d8;">A</div>
<div class="t" style="left:1607.00px;top:33.56px;font-size:24.5px;color:#333;">Z</div>
<svg style="left:1625px;top:23px" width="24.5" height="24.5" viewBox="0 0 24.5 24.5" ><path d="M.9 .9H23.600V3.500L15 12.500V22.800L9.500 19.500V12.500L.9 3.500Z" fill="none" stroke="#444" stroke-width="1.600" stroke-linejoin="round"/></svg>
<div class="t" style="left:1602.70px;top:65.39px;font-size:18.2px;color:#242424;letter-spacing:0.104px;">Sort &amp;</div>
<div class="t" style="left:1602.20px;top:88.89px;font-size:18.2px;color:#242424;letter-spacing:-0.728px;">Filter</div>
<svg style="left:1645.5px;top:93.80000000000001px" width="8.4" height="5" viewBox="0 0 8.4 5" ><path d="M0 0L4.2 4.3L8.4 0" fill="none" stroke="#2b2b2b" stroke-width="1.6"/></svg>
<svg style="left:1675px;top:13px" width="45" height="44" viewBox="0 0 45 44" ><circle cx="28.200" cy="16.500" r="15.300" fill="none" stroke="#444" stroke-width="1.700"/><path d="M17.300 27.300L1.200 42.800" stroke="#444" stroke-width="1.800"/></svg>
<div class="t" style="left:1673.20px;top:65.39px;font-size:18.2px;color:#242424;letter-spacing:-0.260px;">Find &amp;</div>
<div class="t" style="left:1667.70px;top:88.89px;font-size:18.2px;color:#242424;letter-spacing:-1.056px;">Select</div>
<svg style="left:1719px;top:93.80000000000001px" width="8.4" height="5" viewBox="0 0 8.4 5" ><path d="M0 0L4.2 4.3L8.4 0" fill="none" stroke="#2b2b2b" stroke-width="1.6"/></svg>
<div class="t" style="left:1604.00px;top:127.26px;font-size:15.4px;color:#333;letter-spacing:-0.099px;">Editing</div>
<div class="abs" style="left:1745.5px;top:7px;width:1px;height:133.5px;background:#d2d2d2"></div>
<div class="abs hatch" style="left:1758px;top:6px;width:71px;height:113.69999999999999px;border-radius:7px"></div><svg style="left:1758px;top:6px" width="71" height="113.69999999999999" viewBox="0 0 71 113.69999999999999" ><rect x=".5" y=".5" width="70" height="112.69999999999999" rx="7" fill="none" stroke="#8e8e8e" stroke-width="1" stroke-dasharray="5.500 3.500"/></svg>
<svg style="left:1772px;top:13px" width="42" height="42" viewBox="0 0 42 42" >
<rect x=".9" y=".9" width="40.200" height="40.200" fill="none" stroke="#666" stroke-width="1.600"/>
<rect x="5" y="5" width="14" height="14" fill="none" stroke="#666" stroke-width="1.500"/><rect x="23" y="5" width="14" height="14" fill="none" stroke="#666" stroke-width="1.500"/>
<rect x="5" y="23" width="14" height="14" fill="none" stroke="#666" stroke-width="1.500"/><rect x="23" y="23" width="14" height="14" fill="none" stroke="#666" stroke-width="1.500"/></svg>
<div class="t" style="left:1762.80px;top:65.09px;font-size:18.2px;color:#7a7a7a;letter-spacing:-0.086px;">Add-ins</div>
<div class="t" style="left:1766.20px;top:127.26px;font-size:15.4px;color:#333;letter-spacing:-0.070px;">Add-ins</div>
<div class="abs" style="left:1840.5px;top:7px;width:1px;height:133.5px;background:#d2d2d2"></div>
<svg style="left:1879px;top:125.5px" width="14.5" height="8.5" viewBox="0 0 14.5 8.5" ><path d="M.6 .6L7.250 7.300 13.900 .6" fill="none" stroke="#333" stroke-width="1.600"/></svg>
</div><!--/rib-->
<!-- MESSAGE BAR CONTENT -->
<div id="msg" class="abs" style="left:0;top:267px;width:1920px;height:45px">
<div class="abs" style="left:30px;top:10.300000000000011px;width:23.500px;height:23.500px;border-radius:50%;border:1.700px solid #2b88d8;background:#fff"></div>
<div class="abs" style="left:40.500px;top:15.5px;width:2.600px;height:2.600px;border-radius:50%;background:#2b88d8"></div>
<div class="abs" style="left:40.600px;top:19.600000000000023px;width:2.400px;height:9px;background:#2b88d8"></div>
<div class="t" style="left:66.50px;top:16.25px;font-size:16.6px;color:#242424;letter-spacing:-0.393px;font-weight:700;">POSSIBLE DATA LOSS</div>
<div class="t" style="left:257.80px;top:15.40px;font-size:17.6px;color:#242424;letter-spacing:0.096px;">Some features might be lost if you save this workbook in the comma-delimited (.csv) format. To preserve these features, save it in an Excel file format.</div>
<div class="abs" style="left:257.500px;top:35.60000000000002px;width:1182px;height:1.300px;background:#242424"></div>
<div class="abs" style="left:1456px;top:3.3000000000000114px;width:167.500px;height:38.500px;border:1px solid #9a9a9a;border-radius:4px;background:#fff"></div>
<div class="t" style="left:1470.30px;top:15.40px;font-size:17.6px;color:#242424;letter-spacing:0.182px;">Don&#x27;t show again</div>
<div class="abs" style="left:1638.500px;top:3.3000000000000114px;width:102px;height:38.500px;border:1px solid #9a9a9a;border-radius:4px;background:#fff"></div>
<div class="t" style="left:1652.00px;top:15.40px;font-size:17.6px;color:#242424;letter-spacing:-0.693px;">Save As...</div>
<svg style="left:1879px;top:15.800000000000011px" width="13" height="13" viewBox="0 0 13 13"><path d="M.6 .6L12.400 12.400M12.400 .6L.6 12.400" stroke="#222" stroke-width="1.600" fill="none"/></svg>
</div><!--/msg-->
<!-- FORMULA BAR -->
<div id="fbar" class="abs" style="left:0;top:0;width:1920px;height:0">
<!-- formula bar -->
<div class="abs fbox" style="left:13px;width:150px"></div>
<div class="t" id="namebox" style="left:20.00px;top:332.01px;font-size:19.6px;color:#222;letter-spacing:-0.885px;">F13</div>
<svg style="left:140px;top:338px" width="16" height="10" viewBox="0 0 16 10"><path d="M1.5 1.5L8 8l6.500-6.500" fill="none" stroke="#333" stroke-width="1.5"/></svg>
<svg style="left:176px;top:334px" width="4" height="16" viewBox="0 0 4 16"><circle cx="2" cy="2" r="1.600" fill="#3a3a3a"/><circle cx="2" cy="7.800" r="1.600" fill="#3a3a3a"/><circle cx="2" cy="13.600" r="1.600" fill="#3a3a3a"/></svg>
<div class="abs fbox" style="left:195px;width:108px"></div>
<svg style="left:204px;top:333px" width="18" height="18" viewBox="0 0 18 18"><path d="M1 1l16 16M17 1L1 17" stroke="#b0b0b0" stroke-width="1.400" fill="none"/></svg>
<svg style="left:237px;top:333px" width="25" height="18" viewBox="0 0 25 18"><path d="M1 9.500l7 7L24 1" stroke="#b0b0b0" stroke-width="1.400" fill="none"/></svg>
<div class="t" style="left:274px;top:326px;font-family:'Liberation Serif',serif;font-style:italic;font-size:25px;line-height:28px;color:#333;letter-spacing:-1px;-webkit-text-stroke:.45px #333">fx</div>
<div class="abs fbox" style="left:311px;width:1597px"></div>
<svg style="left:1885px;top:337px" width="16" height="10" viewBox="0 0 16 10"><path d="M1.500 1.500L8 8l6.500-6.500" fill="none" stroke="#333" stroke-width="1.500"/></svg>

<div class="abs" id="hdrstrip" style="left:0;top:369px;width:1401px;height:1px;background:#eeeeee"></div>
<div class="abs" style="left:623px;top:369px;width:220px;height:1px;background:#e1e1e1"></div>
</div><!--/fbar-->
<!-- GRID -->
<div id="grid" class="abs">
<div id="colhdr" class="abs"></div><div id="rowhdr" class="abs"></div>
<div class="vl" style="left:135px"></div>
<div class="vl" style="left:231px"></div>
<div class="vl" style="left:327px"></div>
<div class="vl" style="left:423px"></div>
<div class="vl" style="left:623px"></div>
<div class="vl" style="left:843px"></div>
<div class="vl" style="left:939px"></div>
<div class="vl" style="left:1035px"></div>
<div class="vl" style="left:1150px"></div>
<div class="vl" style="left:1400px"></div>
<div class="hl" style="top:56px"></div>
<div class="abs" style="left:0;top:56px;width:39px;height:1px;background:#dadada"></div>
<div class="hl" style="top:85px"></div>
<div class="abs" style="left:0;top:85px;width:39px;height:1px;background:#dadada"></div>
<div class="hl" style="top:114px"></div>
<div class="abs" style="left:0;top:114px;width:39px;height:1px;background:#dadada"></div>
<div class="hl" style="top:143px"></div>
<div class="abs" style="left:0;top:143px;width:39px;height:1px;background:#dadada"></div>
<div class="hl" style="top:172px"></div>
<div class="abs" style="left:0;top:172px;width:39px;height:1px;background:#dadada"></div>
<div class="hl" style="top:201px"></div>
<div class="abs" style="left:0;top:201px;width:39px;height:1px;background:#dadada"></div>
<div class="hl" style="top:230px"></div>
<div class="abs" style="left:0;top:230px;width:39px;height:1px;background:#dadada"></div>
<div class="hl" style="top:259px"></div>
<div class="abs" style="left:0;top:259px;width:39px;height:1px;background:#dadada"></div>
<div class="hl" style="top:288px"></div>
<div class="abs" style="left:0;top:288px;width:39px;height:1px;background:#dadada"></div>
<div class="hl" style="top:317px"></div>
<div class="abs" style="left:0;top:317px;width:39px;height:1px;background:#dadada"></div>
<div class="hl" style="top:346px"></div>
<div class="abs" style="left:0;top:346px;width:39px;height:1px;background:#dadada"></div>
<div class="hl" style="top:375px"></div>
<div class="abs" style="left:0;top:375px;width:39px;height:1px;background:#dadada"></div>
<div class="hl" style="top:404px"></div>
<div class="abs" style="left:0;top:404px;width:39px;height:1px;background:#dadada"></div>
<div class="hl" style="top:433px"></div>
<div class="abs" style="left:0;top:433px;width:39px;height:1px;background:#dadada"></div>
<div class="hl" style="top:462px"></div>
<div class="abs" style="left:0;top:462px;width:39px;height:1px;background:#dadada"></div>
<div class="hl" style="top:491px"></div>
<div class="abs" style="left:0;top:491px;width:39px;height:1px;background:#dadada"></div>
<div class="hl" style="top:520px"></div>
<div class="abs" style="left:0;top:520px;width:39px;height:1px;background:#dadada"></div>
<div class="hl" style="top:549px"></div>
<div class="abs" style="left:0;top:549px;width:39px;height:1px;background:#dadada"></div>
<div class="hl" style="top:578px"></div>
<div class="abs" style="left:0;top:578px;width:39px;height:1px;background:#dadada"></div>
<div class="abs" style="left:623px;top:0;width:220px;height:28px;background:#e1e1e1;border-bottom:2px solid #1e7145"></div>
<div class="abs" style="left:0;top:376px;width:40.500px;height:58px;background:#e1e1e1;border-right:2px solid #1e7145"></div>
<div class="abs" style="left:0;top:404px;width:38px;height:1px;background:#d2d2d2"></div>
<svg style="left:15px;top:6px" width="22" height="18" viewBox="0 0 22 18"><path d="M21 0V17H0Z" fill="#dddddd"/></svg>
<div class="abs" style="left:39px;top:27px;width:584px;height:1px;background:#c6c6c6"></div>
<div class="abs" style="left:843px;top:27px;width:558px;height:1px;background:#c6c6c6"></div>
<div class="abs" style="left:39px;top:28px;width:1px;height:348px;background:#c6c6c6"></div>
<div class="abs" style="left:39px;top:434px;width:1px;height:123px;background:#c6c6c6"></div>
<div class="abs" style="left:135px;top:6px;width:1px;height:21px;background:#d9d9d9"></div>
<div class="ch" style="left:40px;width:96px;color:#444">A</div>
<div class="abs" style="left:231px;top:6px;width:1px;height:21px;background:#d9d9d9"></div>
<div class="ch" style="left:136px;width:96px;color:#444">B</div>
<div class="abs" style="left:327px;top:6px;width:1px;height:21px;background:#d9d9d9"></div>
<div class="ch" style="left:232px;width:96px;color:#444">C</div>
<div class="abs" style="left:423px;top:6px;width:1px;height:21px;background:#d9d9d9"></div>
<div class="ch" style="left:328px;width:96px;color:#444">D</div>
<div class="abs" style="left:623px;top:6px;width:1px;height:21px;background:#d9d9d9"></div>
<div class="ch" style="left:424px;width:200px;color:#444">E</div>
<div class="abs" style="left:843px;top:6px;width:1px;height:21px;background:#d9d9d9"></div>
<div class="ch" style="left:624px;width:220px;color:#1e7145">F</div>
<div class="abs" style="left:939px;top:6px;width:1px;height:21px;background:#d9d9d9"></div>
<div class="ch" style="left:844px;width:96px;color:#444">G</div>
<div class="abs" style="left:1035px;top:6px;width:1px;height:21px;background:#d9d9d9"></div>
<div class="ch" style="left:940px;width:96px;color:#444">H</div>
<div class="abs" style="left:1150px;top:6px;width:1px;height:21px;background:#d9d9d9"></div>
<div class="ch" style="left:1036px;width:115px;color:#444">I</div>
<div class="abs" style="left:1400px;top:6px;width:1px;height:21px;background:#d9d9d9"></div>
<div class="ch" style="left:1151px;width:250px;color:#444">J</div>
<div class="rh" style="top:28px;color:#444">1</div>
<div class="rh" style="top:57px;color:#444">2</div>
<div class="rh" style="top:86px;color:#444">3</div>
<div class="rh" style="top:115px;color:#444">4</div>
<div class="rh" style="top:144px;color:#444">5</div>
<div class="rh" style="top:173px;color:#444">6</div>
<div class="rh" style="top:202px;color:#444">7</div>
<div class="rh" style="top:231px;color:#444">8</div>
<div class="rh" style="top:260px;color:#444">9</div>
<div class="rh" style="top:289px;color:#444">10</div>
<div class="rh" style="top:318px;color:#444">11</div>
<div class="rh" style="top:347px;color:#444">12</div>
<div class="rh" style="top:376px;color:#1e7145">13</div>
<div class="rh" style="top:405px;color:#1e7145">14</div>
<div class="rh" style="top:434px;color:#444">15</div>
<div class="rh" style="top:463px;color:#444">16</div>
<div class="rh" style="top:492px;color:#444">17</div>
<div class="rh" style="top:521px;color:#444">18</div>
<div class="c" style="left:40px;top:28px;width:95px">email</div>
<div class="c" style="left:136px;top:28px;width:95px">mobile</div>
<div class="c" style="left:232px;top:28px;width:95px">name</div>
<div class="c" style="left:328px;top:28px;width:95px">reference_type</div>
<div class="c" style="left:424px;top:28px;width:199px">reference_product_id</div>
<div class="c" style="left:624px;top:28px;width:219px">reference_product_slug</div>
<div class="c" style="left:844px;top:28px;width:95px">question</div>
<div class="c" style="left:940px;top:28px;width:95px">answer</div>
<div class="c" style="left:1036px;top:28px;width:114px;letter-spacing:-0.3px">is_approved</div>
<div class="c" style="left:1151px;top:28px;width:249px">created_at</div>
<div class="c" style="left:40px;top:57px;width:95px">a1@nector.io</div>
<div class="c r" style="left:136px;top:57px;width:95px">1.23E+09</div>
<div class="c" style="left:232px;top:57px;width:95px">a2</div>
<div class="c" style="left:328px;top:57px;width:95px">shopify</div>
<div class="c r" style="left:424px;top:57px;width:199px">1234567890</div>
<div class="c" style="left:624px;top:57px;width:219px">product-slug</div>
<div class="c" style="left:844px;top:57px;width:95px">question</div>
<div class="c" style="left:940px;top:57px;width:95px">answer</div>
<div class="c r" style="left:1036px;top:57px;width:114px">1</div>
<div class="c" style="left:1151px;top:57px;width:249px;letter-spacing:-0.15px">2022-10-03T15:08:12.785Z</div>
<div class="abs" style="left:625px;top:404.300px;width:217.500px;height:28px;background:#c8c8c5"></div>
<div class="abs" style="left:622px;top:374px;width:223px;height:61px;border:2px solid #1e7145"></div>
<div class="abs" style="left:839px;top:429px;width:8px;height:8px;background:#1e7145;border:1px solid #fff"></div>
<svg style="left:902px;top:408px" width="22" height="22" viewBox="0 0 22 22"><path d="M7.500 1.500h7v6h6v7h-6v6h-7v-6h-6v-7h6z" fill="#fff" stroke="#000" stroke-width="1.600" stroke-linejoin="round"/></svg>
</div><!--/grid-->
<!-- SCROLLBARS / SHEET TABS -->
<div id="sheetbar" class="abs" style="left:0;top:0;width:1920px;height:0">
<!-- vertical scrollbar -->
<div class="abs" style="left:1401px;top:370px;width:30px;height:604px;background:#e4e4e4"></div>
<div class="abs" style="left:1404px;top:368px;width:25px;height:562px;background:#f0f0f0;border-radius:12px"></div>
<svg style="left:1409px;top:377px" width="14" height="10" viewBox="0 0 14 10"><path d="M7 .5L13.500 9.500H.5Z" fill="#707070" stroke="#707070" stroke-width="1" stroke-linejoin="round"/></svg>
<div class="abs" style="left:1410px;top:395px;width:12px;height:458px;background:#717171;border-radius:6px"></div>
<svg style="left:1409px;top:912px" width="14" height="10" viewBox="0 0 14 10"><path d="M7 9.500L13.500 .5H.5Z" fill="#707070" stroke="#707070" stroke-width="1" stroke-linejoin="round"/></svg>
<!-- right white panel -->
<div class="abs" style="left:1443px;top:383px;width:465px;height:578px;background:#fff"></div>
<!-- sheet tab bar -->
<div class="abs" style="left:0;top:927px;width:1431px;height:47px;background:#e4e4e4"></div>
<div class="abs" style="left:166px;top:921px;width:364px;height:49px;background:#fff;border-radius:0 0 7px 7px"></div>
<div class="abs" style="left:150px;top:927px;width:16px;height:16px;background:#fff"></div>
<div class="abs" style="left:150px;top:927px;width:16px;height:16px;background:#e4e4e4;border-radius:0 8px 0 0"></div>
<div class="abs" style="left:530px;top:927px;width:16px;height:16px;background:#fff"></div>
<div class="abs" style="left:530px;top:927px;width:16px;height:16px;background:#e4e4e4;border-radius:8px 0 0 0"></div>
<svg style="left:34px;top:942px" width="11" height="16" viewBox="0 0 11 16"><path d="M9.500 1L2 8l7.500 7" fill="none" stroke="#a6a6a6" stroke-width="1.600"/></svg>
<svg style="left:83px;top:942px" width="11" height="16" viewBox="0 0 11 16"><path d="M1.500 1L9 8l-7.500 7" fill="none" stroke="#a6a6a6" stroke-width="1.600"/></svg>
<div class="t" id="sheetname" style="left:178.80px;top:937.33px;font-size:20.4px;color:#222;letter-spacing:1.006px;-webkit-text-stroke:.5px #222;">qnaimport-custom-format-updated</div>
<div class="abs" style="left:178px;top:962px;width:340px;height:3px;background:#107c41"></div>
<div class="abs" style="left:536px;top:937px;width:1px;height:27px;background:#cfcfcf"></div>
<svg style="left:600px;top:941px" width="18" height="18" viewBox="0 0 18 18"><path d="M9 .5v17M.5 9h17" stroke="#333" stroke-width="1.500" fill="none"/></svg>
<svg style="left:862px;top:943px" width="4" height="16" viewBox="0 0 4 16"><circle cx="2" cy="2" r="1.600" fill="#3a3a3a"/><circle cx="2" cy="8" r="1.600" fill="#3a3a3a"/><circle cx="2" cy="14" r="1.600" fill="#3a3a3a"/></svg>
<div class="abs" style="left:888px;top:937px;width:514px;height:26px;background:#f0f0f0;border-radius:13px"></div>
<svg style="left:895px;top:943px" width="11" height="14" viewBox="0 0 11 14"><path d="M.8 7L10 .8V13.200Z" fill="#707070" stroke="#707070" stroke-width="1" stroke-linejoin="round"/></svg>
<div class="abs" style="left:914px;top:944px;width:417px;height:12px;background:#717171;border-radius:6px"></div>
<svg style="left:1384px;top:943px" width="11" height="14" viewBox="0 0 11 14"><path d="M10.200 7L1 .8V13.200Z" fill="#707070" stroke="#707070" stroke-width="1" stroke-linejoin="round"/></svg>

</div><!--/sheetbar-->
<!-- STATUS BAR -->
<div id="status" class="abs" style="left:0;top:975px;width:1920px;height:33px;background:#f3f3f3">
<div class="t" id="ready" style="left:16.40px;top:9.63px;font-size:15.2px;color:#333;letter-spacing:-0.586px;">Ready</div>
<svg style="left:88px;top:6px" width="22" height="22" viewBox="0 0 22 22" fill="none" stroke="#333" stroke-width="1.300" stroke-linejoin="round" stroke-linecap="round"><circle cx="9" cy="3.500" r="2.300"/><path d="M1.500 6.500c2.500 1.500 4 1.800 7.500 1.800s5-.3 7.500-1.800l.8 1.700c-2 1.300-3.300 1.800-4.800 2l.3 3M9 13l-3 7.500-1.800-.8 2.300-7-.2-2.500c-1.500-.2-3-.8-5-2z"/><path d="M14.500 15.200c.2-1.500 1.300-2.200 2.700-2.200 1.500 0 2.600.9 2.600 2.200 0 2-2.500 2-2.500 4" stroke-width="1.500"/><circle cx="17.300" cy="21" r=".7" fill="#333"/></svg>
<div class="t" id="acc" style="left:115.70px;top:9.63px;font-size:15.2px;color:#333;letter-spacing:0.018px;">Accessibility: Unavailable</div>
<div class="abs" style="left:1474px;top:1px;width:60px;height:32px;background:#e0e0e0"></div>
<svg style="left:1493px;top:6px" width="21" height="21" viewBox="0 0 21 21" fill="none" stroke="#333" stroke-width="1.600"><path d="M1 1h19v19H1zM1 7.300h19M1 13.700h19M7.300 1v19M13.700 1v19"/></svg>
<svg style="left:1553px;top:6px" width="23" height="21" viewBox="0 0 23 21" fill="none" stroke="#333" stroke-width="1.500"><path d="M1 1h21v19H1zM5.500 5h12v11.500h-12zM8 8.500h7M8 11h7M8 13.500h7"/></svg>
<svg style="left:1613px;top:6px" width="23" height="21" viewBox="0 0 23 21" fill="none" stroke="#333" stroke-width="1.600"><path d="M1 1h21v19H1zM1 11h21M7.500 1v10M13 1v10"/></svg>
<div class="abs" style="left:1662px;top:16px;width:11px;height:1.500px;background:#444"></div>
<div class="abs" style="left:1682px;top:16px;width:148px;height:1.500px;background:#555"></div>
<div class="abs" style="left:1751px;top:8px;width:9px;height:18px;background:#5a5a5a;border-radius:1px"></div>
<svg style="left:1838px;top:11px" width="12" height="12" viewBox="0 0 12 12"><path d="M6 0v12M0 6h12" stroke="#444" stroke-width="1.300" fill="none"/></svg>
<div class="t" id="zoompct" style="left:1869.50px;top:9.63px;font-size:15.2px;color:#333;letter-spacing:-0.361px;">100%</div>

</div><!--/status-->
<!-- TASKBAR -->
<div id="taskbar" class="abs">
<svg style="left:32px;top:20px" width="30" height="30" viewBox="0 0 30 30" ><defs><linearGradient id="sun" x1=".3" y1="0" x2=".7" y2="1"><stop offset="0" stop-color="#f8b620"/><stop offset="1" stop-color="#ec5f0e"/></linearGradient></defs><circle cx="15" cy="15" r="15" fill="url(#sun)"/></svg>
<div class="abs" style="left:45.700px;top:9.5px;width:23.700px;height:23.700px;border-radius:50%;background:#c42b1c"></div>
<div class="t" style="left:53.30px;top:13.81px;font-size:17px;color:#fff;">2</div>
<div class="t" style="left:76.50px;top:15.20px;font-size:17.6px;color:#fff;letter-spacing:-0.673px;">27°C</div>
<div class="t" style="left:76.50px;top:39.50px;font-size:17.6px;color:#d6d6d6;letter-spacing:-0.024px;">Sunny</div>
<svg style="left:518px;top:19.5px" width="35" height="35" viewBox="0 0 35 35" ><defs><linearGradient id="win" x1="0" y1="0" x2="1" y2="1"><stop offset="0" stop-color="#5fd0ff"/><stop offset="1" stop-color="#0c8ae6"/></linearGradient></defs>
<rect x="0" y="0" width="16.700" height="16.700" rx="1.500" fill="url(#win)"/><rect x="18.300" y="0" width="16.700" height="16.700" rx="1.500" fill="url(#win)"/>
<rect x="0" y="18.300" width="16.700" height="16.700" rx="1.500" fill="url(#win)"/><rect x="18.300" y="18.300" width="16.700" height="16.700" rx="1.500" fill="url(#win)"/></svg>
<div class="abs" style="left:575px;top:14px;width:326.500px;height:44px;border-radius:22px;background:#f3f3f3;overflow:hidden" id="pill"></div>
<svg style="left:591.5px;top:25.5px" width="22" height="22" viewBox="0 0 22 22" ><circle cx="9" cy="9" r="7.500" fill="none" stroke="#222" stroke-width="2.600"/><path d="M14.500 14.500L20.300 20.300" stroke="#222" stroke-width="3" stroke-linecap="round"/></svg>
<div class="t" style="left:629.80px;top:27.47px;font-size:20px;color:#5a5a5a;letter-spacing:-0.732px;">Search</div>
<svg style="left:821px;top:16px" width="80" height="41" viewBox="0 0 80 41" ><defs><clipPath id="lc"><path d="M0 30C-1 18 6 4 18 1L40 6 56 .5H59.500A20 20 0 0 1 59.500 40.500H12C5 38 1 35 0 30Z"/></clipPath>
<linearGradient id="rv" x1="0" y1="0" x2="1" y2="1"><stop offset="0" stop-color="#6fdadb"/><stop offset=".5" stop-color="#b9eef0"/><stop offset="1" stop-color="#2cc3c8"/></linearGradient>
<linearGradient id="mt" x1="0" y1="0" x2="1" y2="0"><stop offset="0" stop-color="#8b84ad"/><stop offset="1" stop-color="#b9bbdc"/></linearGradient>
<linearGradient id="bs" x1="0" y1="0" x2="0" y2="1"><stop offset="0" stop-color="#c3d860"/><stop offset="1" stop-color="#4fae4a"/></linearGradient></defs>
<g clip-path="url(#lc)">
<path d="M26 18L33 7.500 38 13.500 43 9.500 49 14 58 13.500V22H26Z" fill="url(#mt)"/><path d="M33 7.500L36 14 31 22H26V18Z" fill="#7f779f"/>
<path d="M28 22C36 19 50 18 60 18V41H16C22 36 34 32 30 26Z" fill="url(#rv)"/>
<path d="M18 41C30 38 40 32 38 26L44 41Z" fill="#27bfc6"/>
<path d="M40 23C46 19 56 20 62 17L80 16V32L58 31C52 28 44 28 40 23Z" fill="#2f9e3f"/><path d="M42 23C44 20.500 49 20.500 50 23Z" fill="#b5c232"/><path d="M53 26C55 23.500 60 23.500 61 26Z" fill="#c2c83a"/>
<path d="M54 17C54 10 58 4 64 3S74 7 80 12V24H60Z" fill="#43a847"/><path d="M72 18L80 14V34H74Z" fill="#2f9e3f"/><path d="M62 12C62 7 66 3 69 5S71 12 70 16Z" fill="#8bc34a"/><rect x="69.500" y="13" width="1.800" height="4.500" fill="#e07a2f"/>
<path d="M46 41C46 33 52 27 60 27 64 24 72 24 76 28 80 30 80 36 80 41Z" fill="url(#bs)"/><path d="M58 29C62 25 70 25 74 29 70 28 64 28 62 32Z" fill="#e3d06a"/><path d="M48 36C50 30 56 28 60 30 56 30 52 33 50 38Z" fill="#e0c860"/>
<path d="M14 24C20 21 30 22 34 25 38 27 38 32 34 35L22 41H14Z" fill="#1f8f38"/><path d="M17 27C20 24 28 24 31 27 28 30 20 30 17 27Z" fill="#a9c734"/><path d="M16 32C18 30 22 30 24 33 22 36 18 36 16 32Z" fill="#2aa3a0"/>
<path d="M0 22C2 20 6 20 8 23L10 38H2Z" fill="#264f2c"/>
<path d="M2 20C0 12 4 4 14 1 18 0 24 2 26 8 27 12 26 18 24 22 22 16 18 12 14 14 10 16 8 22 6 26Z" fill="#3aa63f"/>
<path d="M6 8C10 2 18 1 22 5 16 4 10 7 8 14Z" fill="#1f8f38"/><path d="M12 10C16 7 22 8 25 14 20 11 16 11 13 15Z" fill="#9ccc50"/><path d="M3 18C3 12 6 9 9 9 6 12 5 16 5 22Z" fill="#8bc34a"/><path d="M16 14C20 13 23 17 23 22 21 18 18 17 16 18Z" fill="#a9d15a"/>
<path d="M11.500 12L13.500 12.500 12 41H8.500Z" fill="#d9872c"/><path d="M12.500 20L5 41H8L13 24Z" fill="#e6b422"/><path d="M13 14L15 14 17.500 41H14.500Z" fill="#b56a2a"/>
</g></svg>
<svg style="left:921px;top:19px" width="37" height="34" viewBox="0 0 37 34" ><rect x="0" y="9.500" width="26.500" height="24" rx="3" fill="#7a7a7a"/><rect x="9.500" y="0" width="27" height="24.500" rx="3" fill="#f2f2f2"/><rect x="9.500" y="9.500" width="17" height="15" fill="#cfcfcf"/></svg>
<svg style="left:987.5px;top:20.200000000000045px" width="35" height="32" viewBox="0 0 35 32" ><defs><linearGradient id="cp1" x1="0" y1="0" x2="0" y2="1"><stop offset="0" stop-color="#1f6fe5"/><stop offset=".25" stop-color="#21a0e8"/><stop offset=".55" stop-color="#4ec68a"/><stop offset=".85" stop-color="#e9d52a"/><stop offset="1" stop-color="#f0b429"/></linearGradient>
<linearGradient id="cp2" x1="0" y1="0" x2="0" y2="1"><stop offset="0" stop-color="#a95cf0"/><stop offset=".45" stop-color="#ee5fa2"/><stop offset="1" stop-color="#fba24a"/></linearGradient>
<linearGradient id="cp3" x1="0" y1="0" x2="0" y2="1"><stop offset="0" stop-color="#f59a3a"/><stop offset="1" stop-color="#ee4e3a"/></linearGradient></defs>
<path d="M14.500 1H22.500C24.800 1 26 2.500 26.500 4.500L28 10H21.500C18.800 10 17.500 11.500 16.500 14.500L14.500 22H6C2.300 22 .6 19 1.600 15.500L5 5C6 2 8 1 11 1Z" fill="url(#cp1)"/>
<path d="M16 1H22.500C24.800 1 26 2.500 26.500 4.500L28 10H21.500C19.500 10 18.200 10.800 17.400 12.500Z" fill="#1d4fd8"/>
<path d="M6.500 22H14.500L13 27.500C12.400 29.600 11 30.800 9 30.800C6.300 30.800 5 28.300 5.800 25.500Z" fill="url(#cp3)"/>
<path d="M21.500 31H11.500C10.500 31 9.800 30.700 9.400 30.300C11 30 12.300 29 13 27L16.500 14.500C17.500 11.500 18.800 10 21.500 10H29C32.700 10 34.400 13 33.400 16.500L30 27C29 30 27 31 24 31Z" fill="url(#cp2)"/>
<path d="M17 10.300H21L17.200 21.600H13.300Z" fill="#1d1d1d"/></svg>
<svg style="left:1053px;top:20px" width="36" height="33" viewBox="0 0 36 33" ><path d="M0 3A2.500 2.500 0 0 1 2.500 .5H11L15 4.500H33.500A2.500 2.500 0 0 1 36 7V12H0Z" fill="#e8a713"/>
<rect x="0" y="6.500" width="36" height="26" rx="2.500" fill="#ffd04d"/><path d="M0 9A2.500 2.500 0 0 1 2.500 6.500H14L17 4H0Z" fill="#ffd04d"/>
<path d="M6 32.500V25.500A3.500 3.500 0 0 1 9.500 22H26.500A3.500 3.500 0 0 1 30 25.500V32.500Z" fill="#1679d2"/><rect x="10.500" y="25" width="15" height="2.300" rx="1.100" fill="#0d5aa7"/></svg>
<svg style="left:1119px;top:18px" width="36" height="36" viewBox="0 0 36 36" ><circle cx="18" cy="18" r="18" fill="#fff"/>
<path d="M18 18L2.410 9A18 18 0 0 1 33.590 9Z" fill="#ea4335"/>
<path d="M18 18L33.590 9A18 18 0 0 1 18 36Z" fill="#fbbc04"/>
<path d="M18 18L18 36A18 18 0 0 1 2.410 9Z" fill="#34a853"/>
<path d="M18 9.500H33.300A18 18 0 0 0 2.410 9L10.200 22.500Z" fill="#ea4335"/>
<path d="M25.800 22.500L18 36A18 18 0 0 0 33.590 9L33.300 9.500H18Z" fill="#fbbc04"/>
<path d="M10.200 22.500L2.410 9A18 18 0 0 0 18 36L25.800 22.500Z" fill="#34a853"/>
<circle cx="18" cy="18" r="8.700" fill="#fff"/><circle cx="18" cy="18" r="6.800" fill="#4285f4"/></svg>
<div class="abs" style="left:1133px;top:60.200000000000045px;width:9px;height:4.300px;border-radius:2.200px;background:#8d8d8d"></div>
<div class="abs" style="left:1173px;top:6px;width:60px;height:60px;border-radius:7px;background:#7b3f4b"></div>
<div class="abs" style="left:1178.700px;top:60px;width:48.500px;height:5px;border-radius:2.500px;background:#f6a3b3"></div>
<svg style="left:1185.5px;top:19px" width="35" height="35" viewBox="0 0 35 35" ><circle cx="17.500" cy="17.500" r="17.200" fill="#f5f1f1"/>
<g stroke-linecap="round" stroke-width="4.500" fill="none">
<path d="M14.200 7.200V7.300" stroke="#36c5f0"/><path d="M7.300 14H14.200" stroke="#36c5f0"/>
<path d="M27.800 14V14.100" stroke="#2eb67d"/><path d="M20.900 7.200V14" stroke="#2eb67d"/>
<path d="M20.900 27.800V27.700" stroke="#ecb22e"/><path d="M20.900 20.900H27.800" stroke="#ecb22e"/>
<path d="M7.300 20.900V21" stroke="#e01e5a"/><path d="M14.200 20.900V27.800" stroke="#e01e5a"/></g></svg>
<div class="abs" style="left:1206.500px;top:11.5px;width:22px;height:22px;border-radius:50%;background:#e01e5a;border:2px solid #5a2a35"></div>
<div class="t" style="left:1213.30px;top:15.48px;font-size:15.5px;color:#fff;font-weight:700;">3</div>
<svg style="left:1250.5px;top:17.5px" width="37.5" height="37.5" viewBox="0 0 37.5 37.5" ><path d="M19 1.800A16.800 16.800 0 0 0 4.600 27.200L1.800 35.800 10.800 33A16.800 16.800 0 1 0 19 1.800Z" fill="none" stroke="#25d366" stroke-width="3.800" stroke-linejoin="round"/>
<path d="M13.200 10.500c-.7 0-2.200 1.200-2.200 3.400 0 3.800 4.800 9.800 10.500 11.800 2.500.9 4.300-.4 5-1.700.4-.9.400-1.700.2-2l-3.600-1.800c-.5-.2-.9 0-1.200.4l-1.200 1.500c-.3.300-.7.400-1.100.2-2.300-1-4.200-2.800-5.300-5-.2-.4-.1-.8.200-1.100l1-1.200c.3-.4.3-.8.200-1.100l-1.500-3.100c-.2-.3-.5-.3-1-.3z" fill="#25d366"/></svg>
<div class="abs" style="left:1265px;top:60.200000000000045px;width:9px;height:4.300px;border-radius:2.200px;background:#8d8d8d"></div>
<div class="abs" style="left:1305px;top:6px;width:59.500px;height:60px;border-radius:7px;background:#292929;border:1px solid #343434"></div>
<div class="abs" style="left:1323px;top:60px;width:24px;height:5px;border-radius:2.500px;background:#4cc2ff"></div>
<svg style="left:1316px;top:19px" width="33" height="34" viewBox="0 0 33 34" ><defs><linearGradient id="xg2" x1="0" y1="0" x2="0" y2="1"><stop offset="0" stop-color="#1f8a3a"/><stop offset="1" stop-color="#146f2e"/></linearGradient></defs>
<rect x="6" y="0" width="27" height="34" rx="3.500" fill="url(#xg2)"/>
<path d="M6 3.500A3.500 3.500 0 0 1 9.500 0H19.500V12H6Z" fill="#6fd66a"/><path d="M19.500 0H29.500A3.500 3.500 0 0 1 33 3.500V13H19.500Z" fill="#a8e86c"/>
<path d="M19.500 13H33V23H19.500Z" fill="#35a84e"/><path d="M6 12H19.500V23H6Z" fill="#2b9a45"/>
<rect x="0" y="14" width="16.500" height="17" rx="3" fill="#0f6c39"/>
<text x="8.250" y="27" text-anchor="middle" font-size="12.500" font-weight="700" fill="#fff" font-family="Liberation Sans, sans-serif">X</text></svg>
<svg style="left:1471px;top:30.5px" width="16.5" height="10" viewBox="0 0 16.5 10" ><path d="M1 9L8.250 1.700 15.500 9" fill="none" stroke="#fff" stroke-width="2"/></svg>
<svg style="left:1514px;top:26.5px" width="26" height="22" viewBox="0 0 26 22" ><path d="M6.500 16.500A5 5 0 0 1 5.500 6.700 7 7 0 0 1 18.500 5.500 5.500 5.500 0 0 1 20 16.500Z" fill="#e4e4e4"/><path d="M3 16.500A4.500 4.500 0 0 1 5.500 8.200 6 6 0 0 1 13 12Z" fill="#b9b9b9"/>
<circle cx="18.300" cy="14.700" r="6.600" fill="#0f7bd7"/><rect x="17.500" y="13.600" width="1.700" height="4.600" fill="#fff"/><circle cx="18.350" cy="11.500" r="1.050" fill="#fff"/></svg>
<svg style="left:1566px;top:23.5px" width="18.5" height="24.5" viewBox="0 0 18.5 24.5" ><rect x="5.300" y="1" width="7.800" height="14.500" rx="3.900" fill="none" stroke="#7fd6ea" stroke-width="1.800"/><path d="M1.200 10.500v1a8 8 0 0 0 16 0v-1M9.200 19.800V24" fill="none" stroke="#7fd6ea" stroke-width="1.800"/></svg>
<div class="t" style="left:1615.30px;top:17.87px;font-size:17.4px;color:#fff;letter-spacing:-1.753px;">ENG</div>
<div class="t" style="left:1623.30px;top:40.37px;font-size:17.4px;color:#fff;letter-spacing:0.100px;">IN</div>
<svg style="left:1677px;top:26.5px" width="24" height="18" viewBox="0 0 24 18" ><g fill="none" stroke="#fff" stroke-width="1.900" stroke-linecap="round"><path d="M1.200 7A15.500 15.500 0 0 1 22.800 7"/><path d="M4.800 10.800A10.300 10.300 0 0 1 19.200 10.800"/><path d="M8.300 14.300A5.300 5.300 0 0 1 15.700 14.300"/></g><circle cx="12" cy="16.300" r="1.600" fill="#fff"/></svg>
<svg style="left:1712px;top:25.5px" width="26" height="21" viewBox="0 0 26 21" ><path d="M1 7.500H5L10.500 2.500V18.500L5 13.500H1Z" fill="none" stroke="#fff" stroke-width="1.700" stroke-linejoin="round"/>
<g fill="none" stroke="#fff" stroke-width="1.700" stroke-linecap="round"><path d="M13.800 7.300a4.600 4.600 0 0 1 0 6.400"/><path d="M16.800 4.500a8.700 8.700 0 0 1 0 12"/><path d="M20 1.600a13 13 0 0 1 0 17.800"/></g></svg>
<svg style="left:1748.5px;top:23.5px" width="25" height="21.5" viewBox="0 0 25 21.5" ><path d="M5 7.500H19A2.500 2.500 0 0 1 21.500 10V17.500A2.500 2.500 0 0 1 19 20H3.500A2.500 2.500 0 0 1 1 17.500V12" fill="none" stroke="#fff" stroke-width="1.700"/><path d="M21.500 11.500h1.300a1.200 1.200 0 0 1 1.200 1.200v2.600a1.200 1.200 0 0 1-1.200 1.200H21.500z" fill="#fff"/>
<path d="M3.500 17.500V10H18.500V17.500Z" fill="#fff"/><path d="M6.500 0L1.500 8.500H5L3.500 14 9.500 5.500H5.800Z" fill="#fff" stroke="#1d1d1d" stroke-width="1.200"/></svg>
<div class="t" style="left:1848.30px;top:15.87px;font-size:17.4px;color:#fff;letter-spacing:-0.259px;">14:33</div>
<div class="t" style="left:1799.00px;top:39.67px;font-size:17.4px;color:#fff;letter-spacing:0.454px;">10-11-2025</div>
</div><!--/taskbar-->
</body>
</html>
